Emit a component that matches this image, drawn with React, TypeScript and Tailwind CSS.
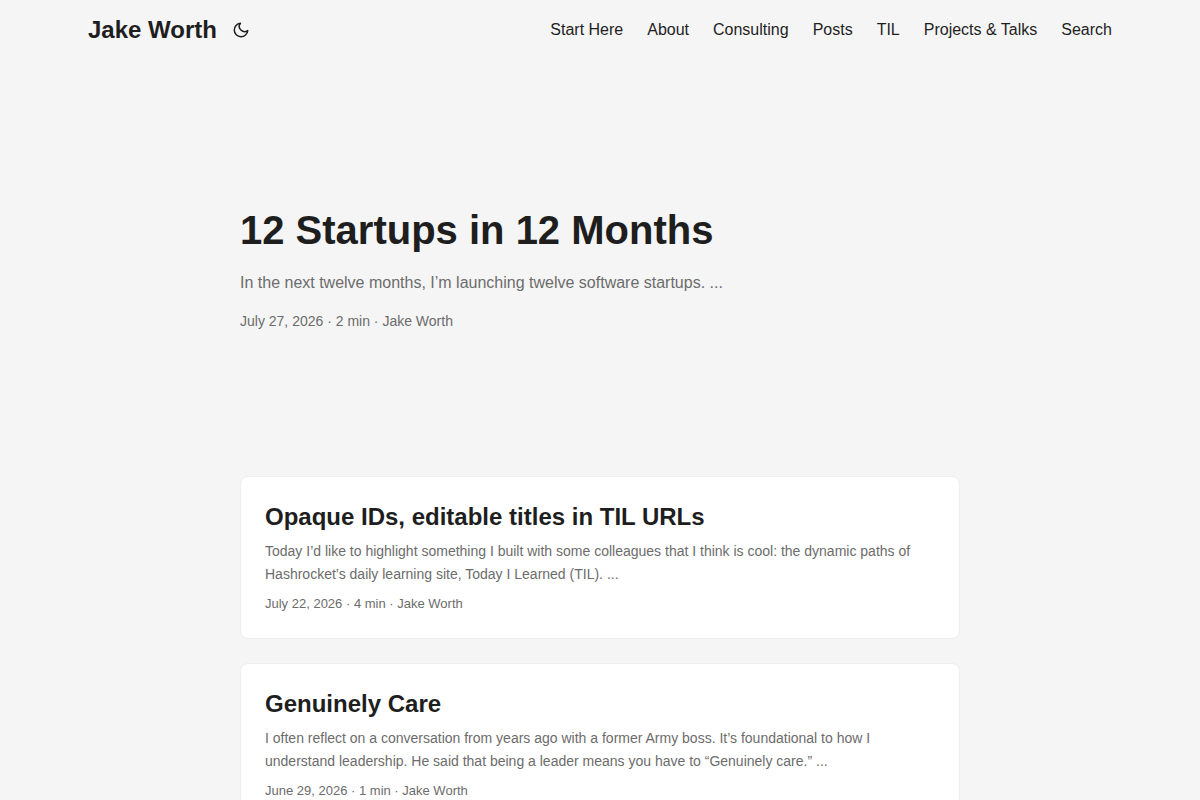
import React from 'react';
import { FiMoon } from 'react-icons/fi';

const navLinks = [
  { label: 'Start Here', href: '/start-here' },
  { label: 'About', href: '/about' },
  { label: 'Consulting', href: '/consulting' },
  { label: 'Posts', href: '/posts' },
  { label: 'TIL', href: '/til' },
  { label: 'Projects & Talks', href: '/projects' },
  { label: 'Search', href: '/search' },
];

const posts = [
  {
    title: 'Opaque IDs, editable titles in TIL URLs',
    summary:
      'Today I’d like to highlight something I built with some colleagues that I think is cool: the dynamic paths of Hashrocket’s daily learning site, Today I Learned (TIL). ...',
    meta: 'July 22, 2026 · 4 min · Jake Worth',
    href: '/opaque-ids',
  },
  {
    title: 'Genuinely Care',
    summary:
      'I often reflect on a conversation from years ago with a former Army boss. It’s foundational to how I understand leadership. He said that being a leader means you have to “Genuinely care.” ...',
    meta: 'June 29, 2026 · 1 min · Jake Worth',
    href: '/genuinely-care',
  },
];

function Header() {
  return (
    <header>
      <nav className="mx-auto flex max-w-[1072px] flex-wrap justify-between px-6 leading-[60px]">
        {/* Logo and theme toggle */}
        <div className="flex">
          <a href="/" className="text-2xl leading-[60px] font-bold">Jake Worth</a>
          <button type="button" aria-label="Toggle theme" className="ml-3 flex w-6 items-center justify-center">
            <FiMoon size={18} />
          </button>
        </div>

        {/* Menu */}
        <ul className="flex flex-wrap gap-x-6">
          {navLinks.map((link) => (
            <li key={link.label}>
              <a href={link.href}>{link.label}</a>
            </li>
          ))}
        </ul>
      </nav>
    </header>
  );
}

function FirstEntry() {
  return (
    <article className="mt-6 mb-12 flex min-h-80 flex-col justify-center">
      <h1 className="text-[40px] leading-[52px] font-bold">
        <a href="/12-startups">12 Startups in 12 Months</a>
      </h1>
      <p className="my-3.5 leading-[26px] text-[#6c6c6c]">
        In the next twelve months, I’m launching twelve software startups. ...
      </p>
      <footer className="text-sm leading-[22px] text-[#6c6c6c]">July 27, 2026 · 2 min · Jake Worth</footer>
    </article>
  );
}

function App() {
  return (
    <div className="min-h-screen bg-[#f5f5f5] font-['Liberation_Sans',Arial,sans-serif] text-base text-[#1e1e1e]">
      <Header />
      <main className="mx-auto max-w-3xl p-6">
        <FirstEntry />

        {/* Post cards */}
        {posts.map((post) => (
          <article key={post.title} className="mb-6 rounded-lg border border-[#eeeeee] bg-white p-6">
            <h2 className="text-2xl leading-[31px] font-bold">
              <a href={post.href}>{post.title}</a>
            </h2>
            <p className="my-2 text-sm leading-[23px] text-[#6c6c6c]">{post.summary}</p>
            <footer className="text-[13px] leading-5 text-[#6c6c6c]">{post.meta}</footer>
          </article>
        ))}
      </main>
    </div>
  );
}

export default App;
